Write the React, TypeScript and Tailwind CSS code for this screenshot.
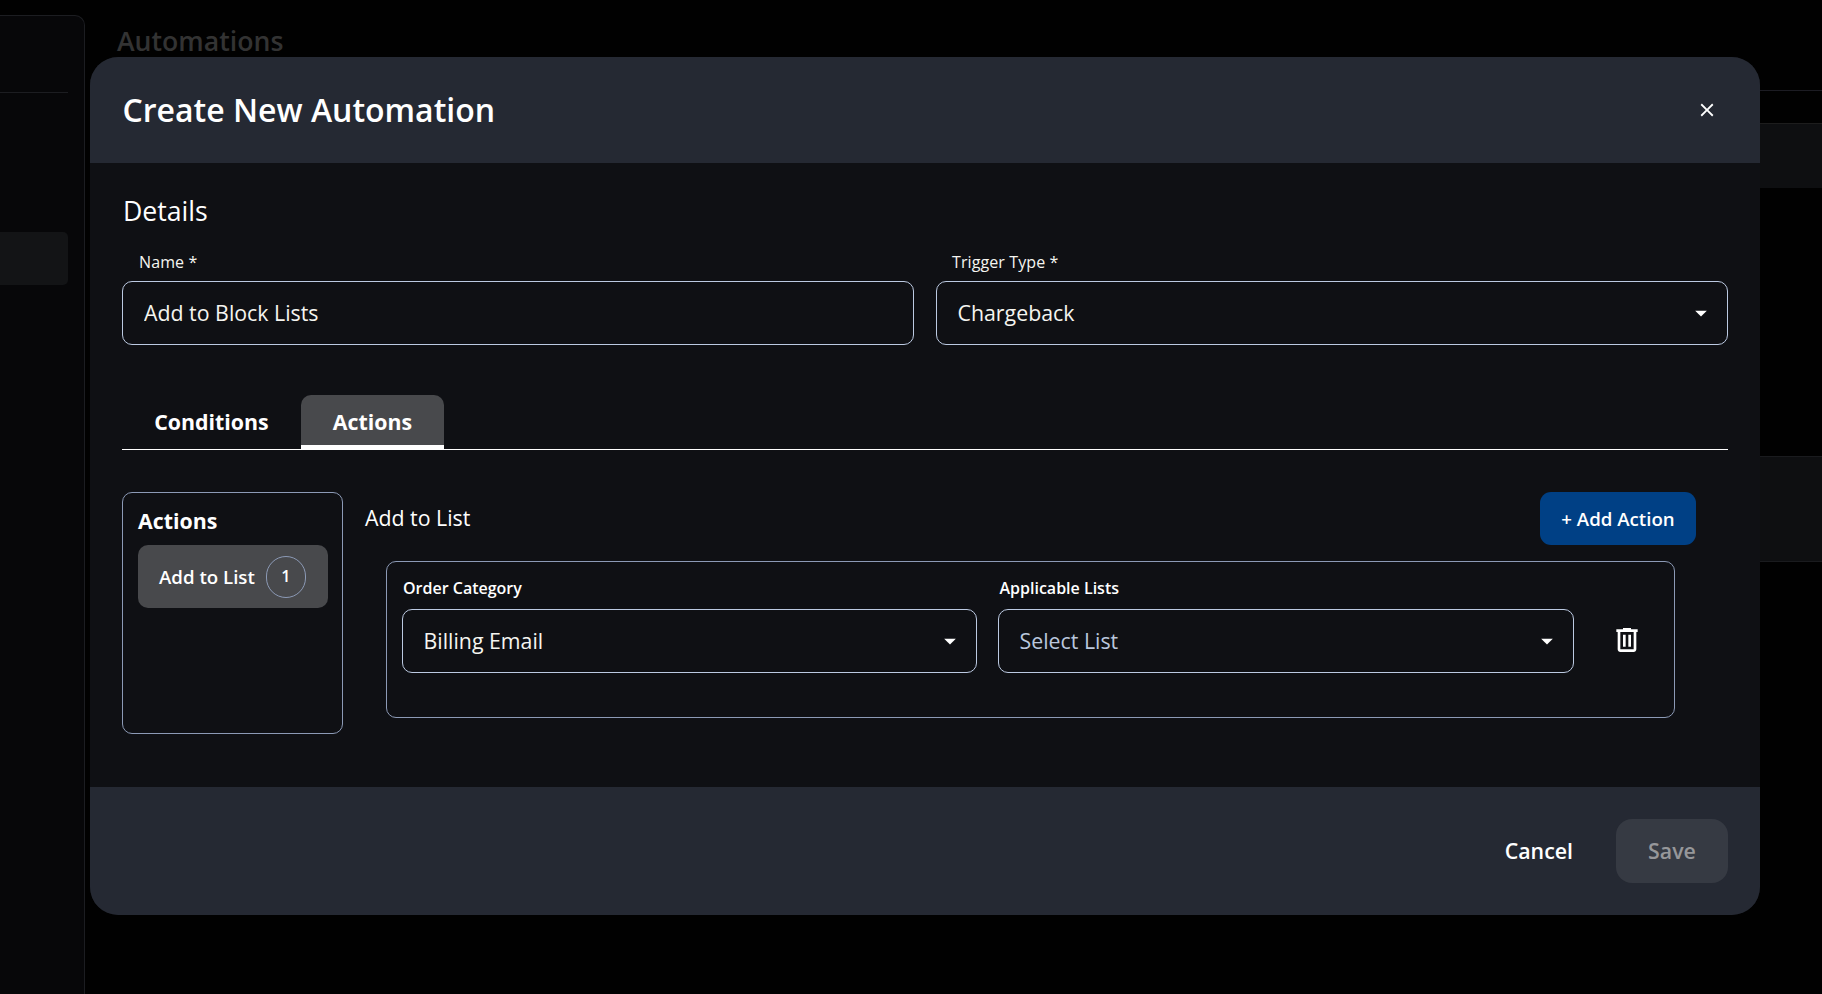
import { MdArrowDropDown, MdClose } from 'react-icons/md'

type SelectProps = {
  value: string
  placeholder?: boolean
}

const Select = ({ value, placeholder }: SelectProps) => {
  return (
    <button
      type="button"
      className="flex h-16 w-full items-center justify-between rounded-[10px] border border-[#bccae2] pr-[12.5px] pl-[20.5px] text-[21.33px]"
    >
      <span className={placeholder ? 'text-[#bac7dd]' : 'text-[#f5f5f0]'}>{value}</span>
      <MdArrowDropDown className="text-white" size={28} />
    </button>
  )
}

const TrashIcon = () => {
  return (
    <svg width="32" height="32" viewBox="0 0 24 24" fill="currentColor">
      <path d="M7 21q-.825 0-1.412-.587Q5 19.825 5 19V6H4V4h5V3h6v1h5v2h-1v13q0 .825-.587 1.413Q17.825 21 17 21ZM17 6H7v13h10ZM9 17h2V8H9Zm4 0h2V8h-2Z" />
    </svg>
  )
}

const Backdrop = () => {
  return (
    <div className="flex h-full">
      <aside className="mt-[15px] w-[85px] rounded-tr-[10px] border-t border-r border-[#1c1d21] bg-[#070709] pr-4">
        <div className="h-[77px] border-b border-[#1c1d21]" />
        <div className="mt-[139px] h-[53px] rounded-r-[5px] bg-[#131416]" />
      </aside>
      <main className="flex flex-1 flex-col pl-8">
        <div className="flex h-[91px] border-b border-[#1c1c23]">
          <h1 className="mt-[23px] text-[26.67px] leading-9 font-semibold text-[#333333]">Automations</h1>
        </div>
        <div className="mt-8 h-[65px] border-t border-[#1d1d1d] bg-[#0e0f11]" />
        <div className="mt-[268px] h-[106px] border-y border-[#1a1b1e] bg-[#0e0f11]" />
      </main>
    </div>
  )
}

const ModalHeader = () => {
  return (
    <header className="flex h-[106px] items-center justify-between bg-[#252933] pr-[42px] pl-8">
      <h2 className="pl-[0.5px] text-[32px] leading-10 font-semibold">Create New Automation</h2>
      <button type="button" aria-label="Close" className="pb-px">
        <MdClose size={22} />
      </button>
    </header>
  )
}

const Details = () => {
  return (
    <section>
      <h3 className="pl-px text-[26.67px] leading-9">Details</h3>
      <div className="mt-[21px] grid grid-cols-2 gap-[22px]">
        <div>
          <label className="block pb-[7px] pl-[17px] text-base leading-6 tracking-[0.1px] text-[#f5f5f0]">
            Name *
          </label>
          <input
            type="text"
            defaultValue="Add to Block Lists"
            className="h-16 w-full rounded-[10px] border border-[#bccae2] px-[21px] pb-0.5 text-[21.33px] text-[#f5f5f0]"
          />
        </div>
        <div>
          <label className="block pb-[7px] pl-4 text-base leading-6 tracking-[0.1px] text-[#f5f5f0]">
            Trigger Type *
          </label>
          <Select value="Chargeback" />
        </div>
      </div>
    </section>
  )
}

const Tabs = () => {
  return (
    <nav className="mt-[50px] flex h-[55px] border-b border-white text-[21.33px] font-bold">
      <button type="button" className="w-[179px]">
        Conditions
      </button>
      <button type="button" className="w-[143px] rounded-t-[10px] border-b-4 border-white bg-[#48494c] pt-1">
        Actions
      </button>
    </nav>
  )
}

const ActionList = () => {
  return (
    <div className="h-[242px] w-[221px] rounded-[10px] border border-[#8c9ab6] pt-3.5 pr-3.5 pl-[15px]">
      <h4 className="text-[21.33px] leading-7 font-bold">Actions</h4>
      <button
        type="button"
        className="mt-2.5 flex h-[63px] w-full items-center gap-[11px] rounded-[10px] bg-[#48494c] pl-[21px] text-[18.67px] font-semibold"
      >
        Add to List
        <span className="flex h-[42px] w-10 items-center justify-center rounded-full border border-[#8c9ab6] pb-0.5 text-base">
          1
        </span>
      </button>
    </div>
  )
}

const ActionEditor = () => {
  return (
    <div className="flex-1 pr-8">
      <div className="flex h-[53px] items-center justify-between">
        <h4 className="pb-0.5 text-[21.33px]">Add to List</h4>
        <button type="button" className="h-[53px] w-[156px] rounded-[11px] bg-[#004085] text-[18.67px] font-semibold">
          + Add Action
        </button>
      </div>
      <div className="mt-4 mr-[21px] ml-[21px] flex h-[157px] rounded-[10px] border border-[#8c9ab6] pt-3.5 pl-[15px]">
        <div className="w-[575px]">
          <label className="block h-[33px] pl-px text-base leading-6 font-semibold">Order Category</label>
          <Select value="Billing Email" />
        </div>
        <div className="ml-[21px] w-[576px]">
          <label className="block h-[33px] pl-[1.5px] text-base leading-6 font-semibold">Applicable Lists</label>
          <Select value="Select List" placeholder />
        </div>
        <button type="button" aria-label="Delete" className="mt-8 ml-[37px] flex h-16 items-center">
          <TrashIcon />
        </button>
      </div>
    </div>
  )
}

const ModalFooter = () => {
  return (
    <footer className="flex h-32 items-center justify-end gap-[43px] bg-[#252933] pr-8 text-[21.33px] font-semibold">
      <button type="button">Cancel</button>
      <button type="button" disabled className="h-16 w-28 rounded-2xl bg-[#363a43] text-[#96979a]">
        Save
      </button>
    </footer>
  )
}

const App = () => {
  return (
    <div className="relative h-[994px] w-[1822px] overflow-hidden bg-[#010101] font-['Open_Sans',sans-serif] text-white">
      <Backdrop />
      <div className="absolute top-[57px] left-[90px] w-[1670px] overflow-hidden rounded-[28px] bg-[#0f1014]">
        <ModalHeader />
        <div className="h-[624px] px-8 pt-[30px]">
          <Details />
          <Tabs />
          <section className="mt-[42px] flex gap-[22px]">
            <ActionList />
            <ActionEditor />
          </section>
        </div>
        <ModalFooter />
      </div>
    </div>
  )
}

export default App
